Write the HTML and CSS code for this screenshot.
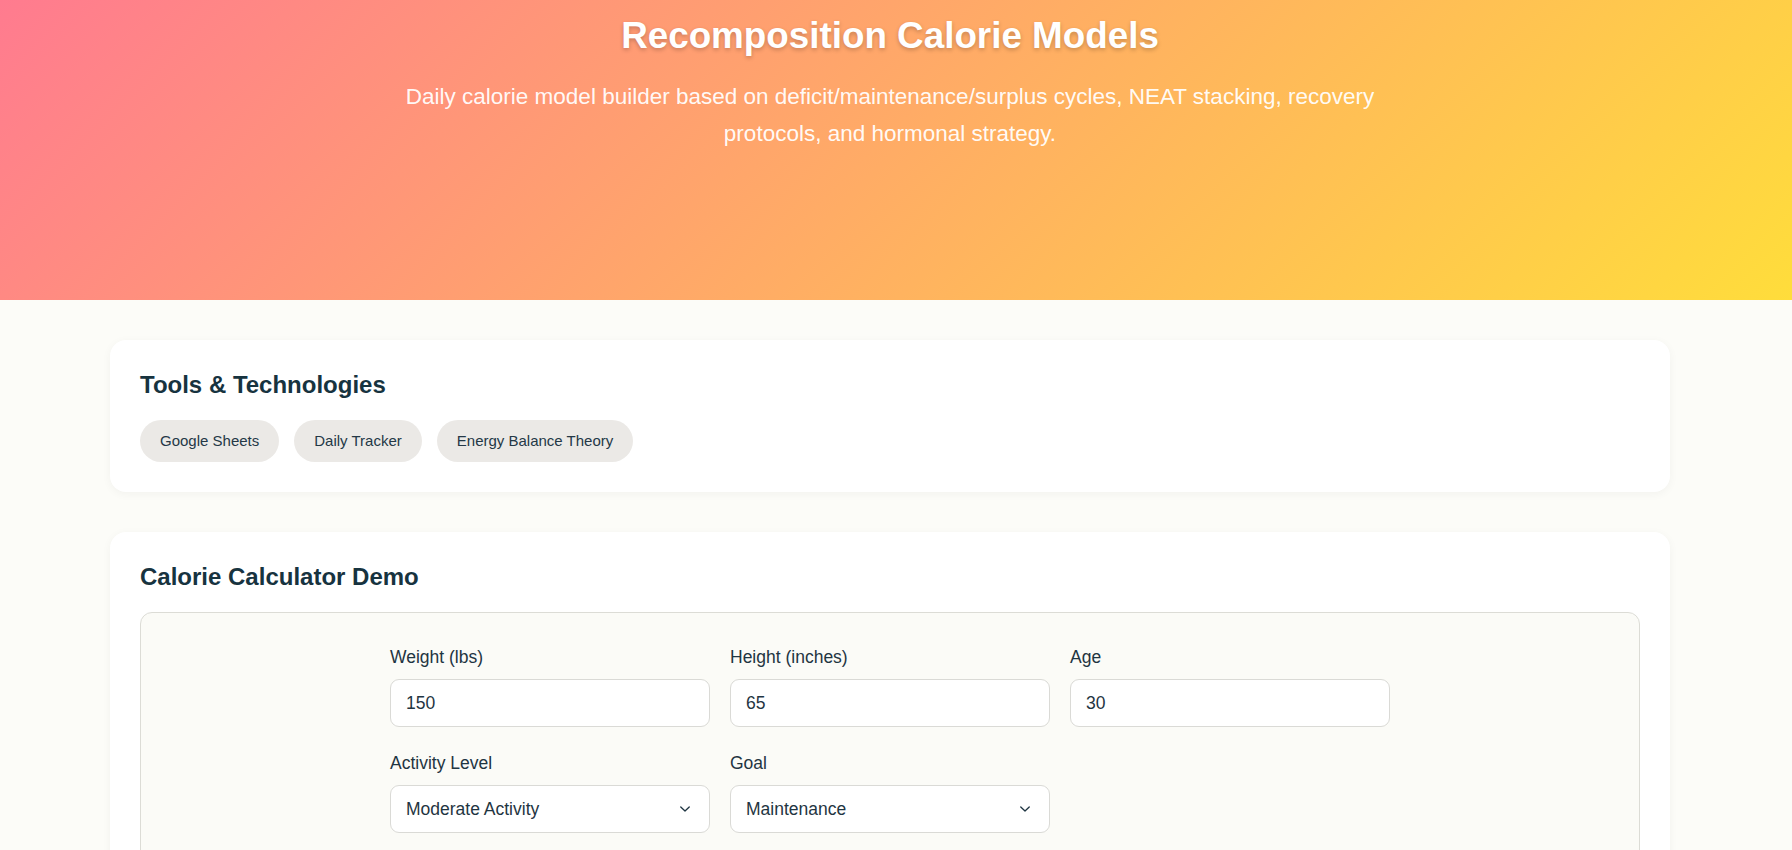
FILE: index.html
```html
<!DOCTYPE html>
<html lang="en">
<head>
<meta charset="utf-8">
<title>Recomposition Calorie Models</title>
<link rel="stylesheet" href="styles.css">
</head>
<body>
<header class="hero">
  <div class="hero-inner">
    <h1 class="hero-title">Recomposition Calorie Models</h1>
    <p class="hero-sub">Daily calorie model builder based on deficit/maintenance/surplus cycles, NEAT stacking, recovery protocols, and hormonal strategy.</p>
  </div>
</header>
<div class="page">
  <main class="container">
    <section class="card">
      <h2 class="card-title">Tools &amp; Technologies</h2>
      <div class="chips">
        <span class="chip">Google Sheets</span>
        <span class="chip">Daily Tracker</span>
        <span class="chip">Energy Balance Theory</span>
      </div>
    </section>
    <section class="card">
      <h2 class="card-title">Calorie Calculator Demo</h2>
      <div class="calc">
        <div class="form-grid">
          <div class="field">
            <label class="field-label" for="w">Weight (lbs)</label>
            <input class="control" id="w" type="number" value="150">
          </div>
          <div class="field">
            <label class="field-label" for="h">Height (inches)</label>
            <input class="control" id="h" type="number" value="65">
          </div>
          <div class="field">
            <label class="field-label" for="a">Age</label>
            <input class="control" id="a" type="number" value="30">
          </div>
          <div class="field">
            <label class="field-label" for="act">Activity Level</label>
            <div class="select-wrap">
              <select class="control select" id="act">
                <option>Sedentary</option>
                <option>Light Activity</option>
                <option selected>Moderate Activity</option>
                <option>Very Active</option>
              </select>
              <svg class="chev" width="12" height="8" viewBox="0 0 12 8"><path d="M1.75 2 L6 6 L10.25 2" fill="none" stroke="#1f3542" stroke-width="1.3" stroke-linecap="round" stroke-linejoin="round"/></svg>
            </div>
          </div>
          <div class="field">
            <label class="field-label" for="goal">Goal</label>
            <div class="select-wrap">
              <select class="control select" id="goal">
                <option>Deficit</option>
                <option selected>Maintenance</option>
                <option>Surplus</option>
              </select>
              <svg class="chev" width="12" height="8" viewBox="0 0 12 8"><path d="M1.75 2 L6 6 L10.25 2" fill="none" stroke="#1f3542" stroke-width="1.3" stroke-linecap="round" stroke-linejoin="round"/></svg>
            </div>
          </div>
        </div>
        <div class="actions">
          <button class="btn" type="button">Calculate Calories</button>
        </div>
      </div>
    </section>
  </main>
</div>
</body>
</html>
```
FILE: styles.css
```css
html, body {
  margin: 0;
  padding: 0;
}
body {
  background: #fcfcf8;
  font-family: "Liberation Sans", Arial, sans-serif;
  color: #1f3542;
}
.hero {
  height: 300px;
  box-sizing: border-box;
  padding: 14px 12px 0 0;
  background: linear-gradient(135deg, #ff7b8f 0%, #ffdd3b 100%);
  color: #fff;
}
.hero-inner {
  max-width: 1000px;
  margin: 0 auto;
  text-align: center;
}
.hero-title {
  margin: 0 0 21px;
  font-size: 36.8px;
  line-height: 1.2;
  font-weight: 700;
  text-shadow: 0 2px 4px rgba(0, 0, 0, 0.22);
}
.hero-sub {
  margin: 0;
  font-size: 22.5px;
  line-height: 36.5px;
  color: rgba(255, 255, 255, 0.96);
}
.page {
  padding-right: 12px;
}
.container {
  max-width: 1600px;
  margin: 0 auto;
  padding: 40px 20px;
  box-sizing: border-box;
  display: flex;
  flex-direction: column;
  gap: 40px;
}
.card {
  background: #fff;
  border-radius: 16px;
  padding: 30px;
  box-shadow: 0 2px 10px rgba(0, 0, 0, 0.045);
}
.card-title {
  margin: 0 0 20px;
  font-size: 24px;
  line-height: 30px;
  font-weight: 700;
  color: #17333f;
}
.chips {
  display: flex;
  flex-wrap: wrap;
  gap: 15px;
}
.chip {
  display: inline-block;
  padding: 10px 20px;
  line-height: 22px;
  font-size: 15px;
  border-radius: 22px;
  background: #ebe9e6;
  color: #243846;
}
.calc {
  border: 1px solid #dcdcd6;
  border-radius: 12px;
  background: #fbfbf7;
  padding: 34px 30px 40px;
}
.form-grid {
  max-width: 1000px;
  margin: 0 auto;
  display: grid;
  grid-template-columns: repeat(3, 1fr);
  column-gap: 20px;
  row-gap: 26px;
}
.field {
  display: flex;
  flex-direction: column;
}
.field-label {
  font-size: 17.5px;
  line-height: 20px;
  margin-bottom: 12px;
  color: #1f3542;
}
.control {
  box-sizing: border-box;
  width: 100%;
  height: 48px;
  padding: 0 15px;
  border: 1px solid #dadad6;
  border-radius: 9px;
  background: #fff;
  font-family: inherit;
  font-size: 17.5px;
  color: #1f3542;
  outline: none;
}
.control::-webkit-inner-spin-button,
.control::-webkit-outer-spin-button {
  -webkit-appearance: none;
  margin: 0;
}
.control[type="number"] {
  -moz-appearance: textfield;
}
.select {
  -webkit-appearance: none;
  appearance: none;
  padding-right: 40px;
}
.select-wrap {
  position: relative;
}
.chev {
  position: absolute;
  right: 19px;
  top: 20px;
  pointer-events: none;
}
.actions {
  max-width: 1000px;
  margin: 30px auto 0;
}
.btn {
  padding: 14px 28px;
  border: none;
  border-radius: 10px;
  background: linear-gradient(135deg, #ff7b8f 0%, #ffc24a 100%);
  color: #fff;
  font-family: inherit;
  font-size: 17.5px;
  font-weight: 700;
}
```
